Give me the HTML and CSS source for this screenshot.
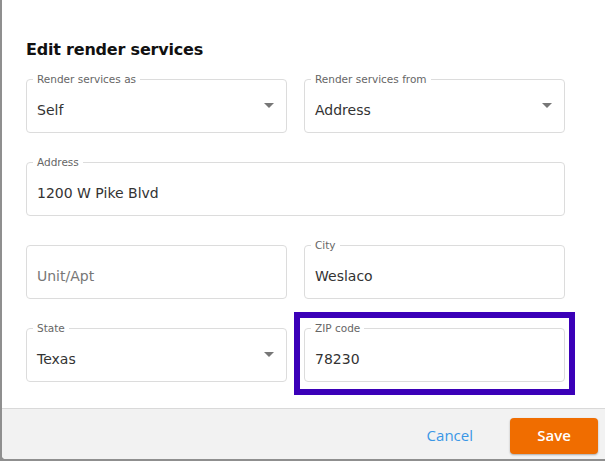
FILE: index.html
```html
<!DOCTYPE html>
<html lang="en">
<head>
    <meta charset="UTF-8">
    <title>Edit render services</title>
    <link rel="stylesheet" href="styles.css">
</head>
<body>
    <div class="dialog">
        <div class="content">
            <h2 class="title">Edit render services</h2>
            <div class="form">
                <div class="field select">
                    <label>Render services as</label>
                    <span class="value">Self</span>
                    <span class="caret"></span>
                </div>
                <div class="field select">
                    <label>Render services from</label>
                    <span class="value">Address</span>
                    <span class="caret"></span>
                </div>
                <div class="field wide">
                    <label>Address</label>
                    <span class="value">1200 W Pike Blvd</span>
                </div>
                <div class="field">
                    <span class="value placeholder">Unit/Apt</span>
                </div>
                <div class="field">
                    <label>City</label>
                    <span class="value">Weslaco</span>
                </div>
                <div class="field select">
                    <label>State</label>
                    <span class="value">Texas</span>
                    <span class="caret"></span>
                </div>
                <div class="field focus">
                    <label>ZIP code</label>
                    <span class="value">78230</span>
                </div>
            </div>
        </div>
        <div class="footer">
            <button class="btn cancel">Cancel</button>
            <button class="btn save">Save</button>
        </div>
    </div>
</body>
</html>
```

FILE: styles.css
```css
html, body {
    margin: 0;
    height: 100%;
}
body {
    background-color: #8f8f8f;
    overflow: hidden;
}
.dialog {
    margin-left: 2px;
    width: 603px;
    height: 459px;
    background-color: #fff;
    border-bottom-left-radius: 4px;
    display: flex;
    flex-direction: column;
    overflow: hidden;
}
.content {
    flex: 1;
    padding: 0 40px 0 24px;
}
.title {
    margin: 40px 0 0;
    height: 19px;
    line-height: 19px;
    font-family: "DejaVu Sans", sans-serif;
    font-size: 16px;
    font-weight: bold;
    letter-spacing: -0.2px;
    color: #111;
}
.form {
    margin-top: 20px;
    display: grid;
    grid-template-columns: 1fr 1fr;
    column-gap: 17px;
    row-gap: 29px;
}
.field {
    position: relative;
    height: 54px;
    box-sizing: border-box;
    border: 1px solid #dcdcdc;
    border-radius: 4px;
    padding: 8px 12px 0 10px;
    display: flex;
    align-items: center;
    font-family: "DejaVu Sans", sans-serif;
}
.field.wide {
    grid-column: 1 / 3;
}
.field label {
    position: absolute;
    top: -7px;
    left: 6px;
    padding: 0 4px;
    background-color: #fff;
    font-size: 10.5px;
    line-height: 13px;
    color: #666;
}
.value {
    font-size: 14px;
    color: #333;
}
.value.placeholder {
    color: #777;
}
.caret {
    margin-left: auto;
    margin-bottom: 10px;
    width: 0;
    height: 0;
    border-left: 5px solid transparent;
    border-right: 5px solid transparent;
    border-top: 5px solid #777;
}
/* outline drawn round the focused zip field */
.field.focus::after {
    content: "";
    position: absolute;
    top: -17px;
    left: -11px;
    right: -11px;
    bottom: -14px;
    border: 6px solid #3b00b8;
}
.footer {
    height: 51px;
    box-sizing: border-box;
    border-top: 1px solid #d9d9d9;
    background-color: #f2f2f2;
    display: flex;
    justify-content: flex-end;
    align-items: flex-start;
    padding: 9px 7px 0 0;
}
.btn {
    height: 36px;
    border: none;
    padding-bottom: 3px;
    font-family: "Open Sans", sans-serif;
    font-size: 15px;
    cursor: pointer;
}
.cancel {
    background: none;
    color: #3a97e6;
    padding-left: 18px;
    padding-right: 18px;
    margin-right: 19px;
}
.save {
    width: 88px;
    background-color: #f06d00;
    color: #fff;
    font-weight: 600;
    border-radius: 4px;
    box-shadow: 0 1px 2px rgba(0,0,0,0.3);
}
```
